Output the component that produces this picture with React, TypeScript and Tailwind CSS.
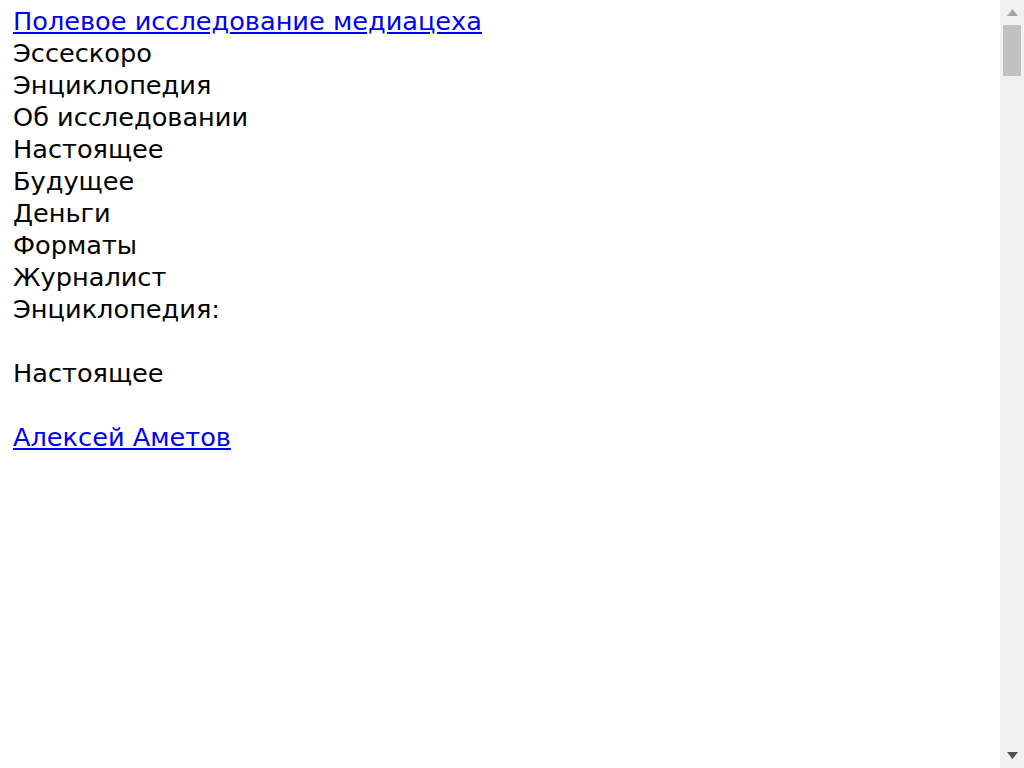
const items = [
  'Эссескоро',
  'Энциклопедия',
  'Об исследовании',
  'Настоящее',
  'Будущее',
  'Деньги',
  'Форматы',
  'Журналист',
  'Энциклопедия:',
];

function Scrollbar() {
  return (
    <div className="flex h-full w-[24px] shrink-0 flex-col bg-[#f1f1f1]">
      <div className="flex h-[25px] items-center justify-center">
        <svg width="11" height="7" viewBox="0 0 11 7">
          <polygon points="5.5,0 11,7 0,7" fill="#a3a3a3" />
        </svg>
      </div>
      <div className="mx-[3px] h-[51px] bg-[#c1c1c1]" />
      <div className="flex-1" />
      <div className="flex h-[25px] items-center justify-center">
        <svg width="11" height="7" viewBox="0 0 11 7">
          <polygon points="0,0 11,0 5.5,7" fill="#505050" />
        </svg>
      </div>
    </div>
  );
}

export default function App() {
  return (
    <div className="flex h-screen overflow-hidden bg-white">
      <main className="flex-1 px-[13px] pt-[5px] font-['DejaVu_Sans',sans-serif] text-[25.6px] leading-[32px] text-black">
        <a href="#" className="text-[#0000ee] underline">
          Полевое исследование медиацеха
        </a>
        {items.map((t) => (
          <div key={t}>{t}</div>
        ))}
        <div className="h-[32px]" />
        <div>Настоящее</div>
        <div className="h-[32px]" />
        <a href="#" className="text-[#0000ee] underline">
          Алексей Аметов
        </a>
      </main>
      <Scrollbar />
    </div>
  );
}
